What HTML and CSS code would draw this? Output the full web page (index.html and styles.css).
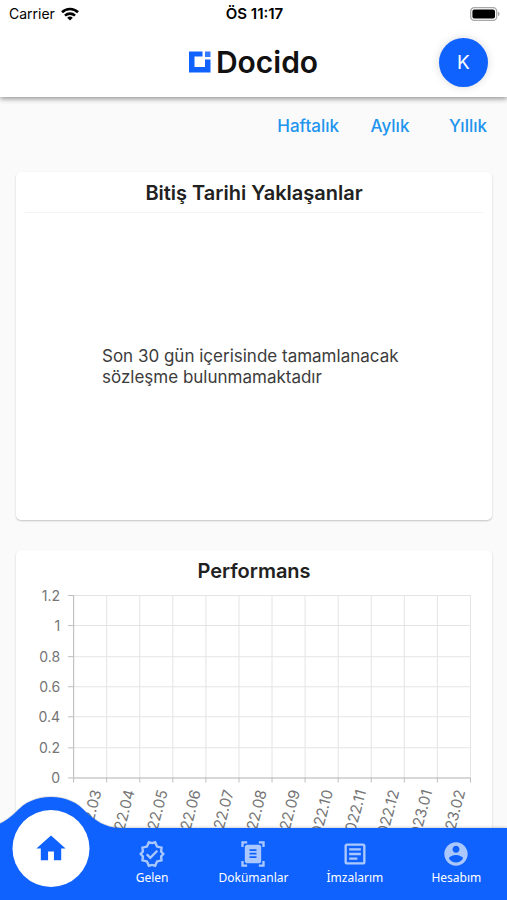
FILE: index.html
```html
<!DOCTYPE html>
<html lang="tr">

<head>
  <meta charset="UTF-8">
  <meta name="viewport" content="width=device-width, initial-scale=1.0">
  <title>Docido</title>
  <link rel="stylesheet" href="styles.css">
</head>

<body>
  <header class="header">
    <div class="status-bar">
      <div class="carrier">
        <span>Carrier</span>
        <svg width="18" height="14" viewBox="0 0 18 14" fill="none" stroke="#000" stroke-width="2.6">
          <path d="M1 5.2a11.5 11.5 0 0 1 16 0" />
          <path d="M4 8.6a7.2 7.2 0 0 1 10 0" />
          <path d="M9 13.6 6.2 10.8a4 4 0 0 1 5.6 0z" fill="#000" stroke="none" />
        </svg>
      </div>
      <span class="clock">ÖS 11:17</span>
      <svg class="battery" width="30" height="14" viewBox="0 0 30 14">
        <rect x="0.7" y="0.7" width="26" height="12.6" rx="3.6" fill="#fff" stroke="#a8a8a8" stroke-width="1.3" />
        <rect x="2.4" y="2.4" width="22.6" height="9.2" rx="2" fill="#000" />
        <path d="M28 4.8c2 .6 2 3.8 0 4.4z" fill="#a8a8a8" />
      </svg>
    </div>
    <div class="title-bar">
      <div class="logo">
        <svg width="22" height="22" viewBox="0 0 22 22" fill="#1062fe">
          <path d="M0 0.5h13.500v5H5.500v10.500H16V8.500h5.500v13H0z" />
          <rect x="16" y="0.500" width="5.500" height="5.500" opacity="0.85" />
        </svg>
        <span>Docido</span>
      </div>
      <button class="avatar" type="button">K</button>
    </div>
  </header>

  <main class="content">
    <div class="periods">
      <button type="button">Haftalık</button>
      <button type="button">Aylık</button>
      <button type="button">Yıllık</button>
    </div>

    <section class="card">
      <h2>Bitiş Tarihi Yaklaşanlar</h2>
      <div class="empty">
        <p>Son 30 gün içerisinde tamamlanacak sözleşme bulunmamaktadır</p>
      </div>
    </section>

    <section class="card">
      <h2>Performans</h2>
      <svg class="chart" viewBox="0 0 475 280" role="img" aria-label="Performans">
        <g id="grid" class="grid"></g>
        <g id="axis" class="axis"></g>
        <g id="values" class="labels"></g>
        <g id="months" class="labels months"></g>
      </svg>
    </section>
  </main>

  <nav class="nav">
    <a class="home" href="#" aria-label="Ana Sayfa">
      <svg class="bump" width="140" height="104" viewBox="0 0 140 104" fill="#1062fe">
        <path d="M0 32C16 32 26 24 34 17C44 6 55 1 70 1S96 6 106 17C114 24 124 32 140 32V104H0z" />
      </svg>
      <span class="home-circle">
        <svg width="35" height="35" viewBox="0 0 24 24" fill="#1062fe">
          <path d="M10 20v-6h4v6h5v-8h3L12 3 2 12h3v8z" />
        </svg>
      </span>
    </a>
    <a class="item" href="#">
      <svg width="28" height="28" viewBox="0 0 24 24" fill="none" stroke-width="2">
        <path d="M12 2.600 14.700 1.900 16.300 5.600 20.200 6.500 19.800 9.900 21.700 12 19.800 14.100 20.200 17.500 16.300 18.400 14.700 22.100 12 21.400 9.300 22.100 7.700 18.400 3.800 17.500 4.200 14.100 2.300 12 4.200 9.900 3.800 6.500 7.700 5.600 9.300 1.900z" />
        <path d="M7.500 12.200 10.500 15.200 16.500 9.200" />
      </svg>
      <span>Gelen</span>
    </a>
    <a class="item" href="#">
      <svg width="28" height="28" viewBox="0 0 24 24">
        <path d="M7 3H4v3H2V1h5v2zm15 3V1h-5v2h3v3h2zM7 21H4v-3H2v5h5v-2zm13-3v3h-3v2h5v-5h-2z" />
        <path fill-rule="evenodd" d="M19 18c0 1.100-.9 2-2 2H7c-1.100 0-2-.9-2-2V6c0-1.100.9-2 2-2h10c1.100 0 2 .9 2 2v12zM15 8H9v1.500h6V8zm0 3H9v1.500h6v-1.500zm0 3H9v1.500h6v-1.500z" />
      </svg>
      <span>Dokümanlar</span>
    </a>
    <a class="item" href="#">
      <svg width="28" height="28" viewBox="0 0 24 24">
        <path d="M19 5v14H5V5h14m0-2H5c-1.100 0-2 .9-2 2v14c0 1.100.9 2 2 2h14c1.100 0 2-.9 2-2V5c0-1.100-.9-2-2-2z" />
        <path d="M14 17H7v-2h7v2zm3-4H7v-2h10v2zm0-4H7V7h10v2z" />
      </svg>
      <span>İmzalarım</span>
    </a>
    <a class="item" href="#">
      <svg width="28" height="28" viewBox="0 0 24 24">
        <path fill-rule="evenodd" d="M12 2C6.480 2 2 6.480 2 12s4.480 10 10 10 10-4.480 10-10S17.520 2 12 2zm0 3c1.660 0 3 1.340 3 3s-1.340 3-3 3-3-1.340-3-3 1.340-3 3-3zm0 14.200c-2.500 0-4.710-1.280-6-3.220.03-1.990 4-3.080 6-3.080 1.990 0 5.970 1.090 6 3.080-1.290 1.940-3.500 3.220-6 3.220z" />
      </svg>
      <span>Hesabım</span>
    </a>
  </nav>

  <script src="chart.js"></script>
</body>

</html>
```

FILE: chart.js
```js
const months = ["2022.03", "2022.04", "2022.05", "2022.06", "2022.07", "2022.08",
  "2022.09", "2022.10", "2022.11", "2022.12", "2023.01", "2023.02"];
const values = ["1.2", "1", "0.8", "0.6", "0.4", "0.2", "0"];

// plot area inside the svg
const left = 57, right = 453, top_ = 11, bottom = 193;

function add(parent, name, attrs, text) {
  const el = document.createElementNS("http://www.w3.org/2000/svg", name);
  for (const key in attrs) el.setAttribute(key, attrs[key]);
  if (text) el.textContent = text;
  document.getElementById(parent).appendChild(el);
}

function line(parent, x1, y1, x2, y2) {
  add(parent, "line", { x1, y1, x2, y2 });
}

const stepX = (right - left) / months.length;
const stepY = (bottom - top_) / (values.length - 1);

values.forEach((value, i) => {
  const y = Math.round(top_ + i * stepY) + 0.5;
  line("grid", left, y, right, y);
  line("axis", left - 5, y, left, y);
  add("values", "text", { x: left - 13, y: y + 5 }, value);
});

for (let i = 0; i <= months.length; i++) {
  const x = Math.round(left + i * stepX) + 0.5;
  line("grid", x, top_, x, bottom);
  line("axis", x, bottom, x, bottom + 5);
}

line("axis", left + 0.5, top_, left + 0.5, bottom);
line("axis", left, bottom + 0.5, right, bottom + 0.5);

months.forEach((month, i) => {
  const x = left + (i + 0.5) * stepX + 12;
  const y = bottom + 14;
  add("months", "text", { x, y, transform: `rotate(-75 ${x} ${y})` }, month);
});
```

FILE: styles.css
```css
* {
  box-sizing: border-box;
}

body {
  margin: 0;
  height: 100vh;
  display: flex;
  flex-direction: column;
  overflow: hidden;
  background: #fafafa;
  color: #212121;
  font-family: Inter, "Liberation Sans", sans-serif;
}

button {
  border: 0;
  padding: 0;
  background: none;
  font-family: inherit;
  cursor: pointer;
}

/* Header */
.header {
  flex: none;
  background: #fff;
  box-shadow: 0 2px 5px rgba(0, 0, 0, 0.4);
  z-index: 1;
}

.status-bar {
  display: grid;
  grid-template-columns: 1fr auto 1fr;
  align-items: center;
  height: 27px;
  padding: 0 7px 0 9px;
  font-size: 14px;
  color: #000;
}

.carrier {
  display: flex;
  align-items: center;
  gap: 6px;
}

.clock {
  font-size: 15px;
  font-weight: 600;
}

.battery {
  justify-self: end;
}

.title-bar {
  display: grid;
  grid-template-columns: 1fr auto 1fr;
  align-items: center;
  height: 70px;
  padding: 0 19px;
}

.logo {
  grid-column: 2;
  display: flex;
  align-items: center;
  gap: 5px;
  font-size: 30px;
  font-weight: 600;
  color: #111;
}

.avatar {
  justify-self: end;
  width: 49px;
  height: 49px;
  border-radius: 50%;
  background: #1062fe;
  box-shadow: 0 0 8px rgba(0, 0, 0, 0.15);
  color: #fff;
  font-size: 19px;
}

/* Content */
.content {
  flex: 1;
  min-height: 0;
  overflow: hidden;
}

.periods {
  display: flex;
  justify-content: flex-end;
  gap: 8px;
  padding: 11px 4px 14px;
}

.periods button {
  min-width: 70px;
  height: 36px;
  padding: 0 8px;
  color: #2094ee;
  font-size: 17px;
  font-weight: 500;
}

.card {
  margin: 14px 15px 30px 16px;
  background: #fff;
  border-radius: 5px;
  box-shadow: 0 1px 2px rgba(0, 0, 0, 0.22);
}

.card h2 {
  margin: 0;
  padding: 9px 0 7px;
  font-size: 20px;
  line-height: 24px;
  font-weight: 600;
  text-align: center;
}

.empty {
  display: flex;
  align-items: center;
  justify-content: center;
  min-height: 308px;
  margin: 0 9px;
  border-top: 1px solid #f4f4f4;
}

.empty p {
  max-width: 304px;
  margin: 0;
  font-size: 17px;
  line-height: 21px;
  color: #3c3c3c;
}

/* Chart */
.chart {
  display: block;
  width: 100%;
  margin-top: -6px;
}

.grid line {
  stroke: #e4e4e4;
}

.axis line {
  stroke: #bdbdbd;
}

.labels text {
  fill: #757575;
  font-size: 14px;
  text-anchor: end;
}

.months text {
  font-size: 15px;
}

/* Bottom navigation */
.nav {
  flex: none;
  display: grid;
  grid-template-columns: repeat(5, 1fr);
  height: 72px;
  background: #1062fe;
  box-shadow: 0 0 3px rgba(0, 0, 0, 0.3);
  z-index: 1;
}

.item {
  display: flex;
  flex-direction: column;
  align-items: center;
  padding-top: 12px;
  color: #fff;
  font-family: "Noto Sans", sans-serif;
  font-size: 12px;
  line-height: 20px;
  text-decoration: none;
}

.item svg {
  opacity: 0.65;
}

.item svg:not([fill]) {
  fill: #fff;
}

.item svg[fill="none"] {
  stroke: #fff;
}

.home {
  position: relative;
}

.bump {
  position: absolute;
  left: 50%;
  bottom: 0;
  transform: translateX(-50%);
  filter: drop-shadow(0 -1px 0 rgba(0, 0, 0, 0.12));
}

.home-circle {
  position: absolute;
  left: 50%;
  bottom: 13px;
  transform: translateX(-50%);
  display: flex;
  align-items: center;
  justify-content: center;
  width: 77px;
  height: 77px;
  border-radius: 50%;
  background: #fff;
}
```
